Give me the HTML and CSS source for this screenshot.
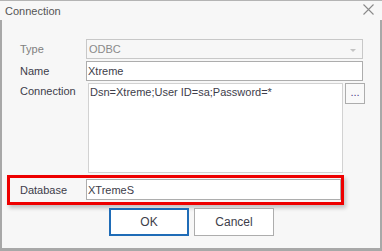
FILE: index.html
```html
<!DOCTYPE html>
<html lang="en">
<head>
  <meta charset="UTF-8">
  <title>Connection</title>
  <link rel="stylesheet" href="styles.css">
</head>
<body>
  <div class="window">
    <div class="titlebar">
      <span class="title">Connection</span>
      <svg class="close" width="11" height="11" viewBox="0 0 11 11">
        <path d="M0.5 0.5 L10.5 10.5 M10.5 0.5 L0.5 10.5" stroke="#8a8a8a" stroke-width="1.1" fill="none"/>
      </svg>
    </div>

    <div class="content">
      <div class="form">
        <div class="row">
          <label class="label disabled">Type</label>
          <div class="combo">
            <span>ODBC</span>
            <span class="arrow"></span>
          </div>
        </div>

        <div class="row">
          <label class="label">Name</label>
          <input class="field" type="text" value="Xtreme">
        </div>

        <div class="row conn-row">
          <label class="label">Connection</label>
          <textarea class="memo">Dsn=Xtreme;User ID=sa;Password=*</textarea>
          <button class="dots">...</button>
        </div>

        <!-- 強調表示された行 -->
        <div class="row highlight">
          <label class="label">Database</label>
          <input class="field" type="text" value="XTremeS">
        </div>
      </div>

      <div class="buttons">
        <button class="btn btn-ok">OK</button>
        <button class="btn">Cancel</button>
      </div>
    </div>
  </div>
</body>
</html>
```

FILE: styles.css
```css
/* 基本設定 */
body {
  margin: 0;
  font-family: "Liberation Sans", Arial, sans-serif;
  font-size: 11px;
  color: #3d3d4a;
  background-color: #f7f7f7;
}
.window {
  width: 382px;
  height: 251px;
  display: flex;
  flex-direction: column;
  background-color: #f7f7f7;
}
.titlebar {
  height: 19px;
  border-top: 1px solid #b4b4b4;
  display: flex;
  align-items: center;
  justify-content: space-between;
  padding: 0 8px 0 5px;
}
.title {
  color: #555;
  margin-top: 1px;
}
.close {
  margin-top: -2px;
}
.content {
  flex: 1;
  border: 2px solid #a8a8a8;
  border-top: none;
  border-bottom-width: 3px;
  padding: 19px 17px 0 18px;
}
.form {
  display: flex;
  flex-direction: column;
  gap: 2px;
}
.row {
  display: grid;
  grid-template-columns: 66px 1fr;
  align-items: center;
}
.label {
  color: #3d3d4a;
}
.label.disabled {
  color: #808080;
}
.combo {
  height: 18px;
  border: 1px solid #c8c8c8;
  display: flex;
  align-items: center;
  justify-content: space-between;
  padding: 0 6px 0 2px;
  color: #8a8a8a;
}
.arrow {
  width: 0;
  height: 0;
  border-left: 3px solid transparent;
  border-right: 3px solid transparent;
  border-top: 3px solid #c4c4c4;
  margin-top: 3px;
}
.field {
  height: 20px;
  box-sizing: border-box;
  border: 1px solid #adadad;
  background-color: #fff;
  font: inherit;
  color: #3d3d4a;
  padding: 0 1px;
  margin: 0;
  outline: none;
}
.conn-row {
  grid-template-columns: 66px 255px 1fr;
  align-items: start;
  column-gap: 2px;
}
.conn-row .label {
  margin-top: 2px;
}
.memo {
  height: 90px;
  box-sizing: border-box;
  border: 1px solid #d2d2d2;
  background-color: #fff;
  font: inherit;
  color: #3d3d4a;
  padding: 2px 1px;
  margin: 0;
  resize: none;
  overflow: hidden;
}
.dots {
  width: 20px;
  height: 21px;
  box-sizing: border-box;
  border: 1px solid #adadad;
  background-color: #f9f9f9;
  font: inherit;
  color: #4a3f8a;
  padding: 0 0 2px;
  margin-left: 0;
  line-height: 1;
}

/* 赤枠の強調 */
.highlight {
  margin: 0 19px 0 -13px;
  border: 3px solid #ee0000;
  padding: 1px 0 2px 10px;
  box-shadow: 2px 3px 4px rgba(0, 0, 0, 0.22);
}
.highlight .field {
  height: 21px;
}

.buttons {
  display: flex;
  justify-content: center;
  gap: 5px;
  margin-top: 3px;
}
.btn {
  width: 80px;
  height: 28px;
  box-sizing: border-box;
  border: 1px solid #adadad;
  background-color: #fff;
  font: inherit;
  font-size: 12px;
  color: #3d3d4a;
}
.btn-ok {
  border: 2px solid #1f6cb7;
}
```
